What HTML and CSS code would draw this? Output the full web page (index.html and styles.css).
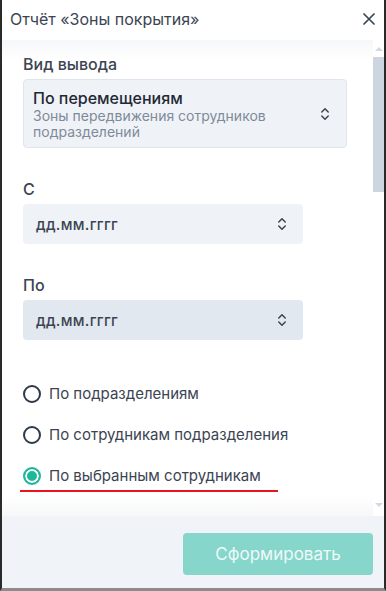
FILE: index.html
```html
<!DOCTYPE html>
<html lang="ru">
<head>
    <meta charset="UTF-8">
    <meta name="viewport" content="width=device-width, initial-scale=1.0">
    <title>Отчёт «Зоны покрытия»</title>
    <link rel="stylesheet" href="styles.css">
</head>
<body>
    <div class="dialog">
        <!-- Header -->
        <header class="dialog-header">
            <h1>Отчёт «Зоны покрытия»</h1>
            <button class="close-btn" aria-label="Закрыть">
                <svg width="12" height="12" viewBox="0 0 12 12"><path d="M1 1 L11 11 M11 1 L1 11" stroke="#3b4452" stroke-width="1.7" fill="none" stroke-linecap="round"/></svg>
            </button>
        </header>

        <!-- Form body -->
        <main class="dialog-body">
            <div class="field">
                <label class="field-label">Вид вывода</label>
                <div class="select select-wide">
                    <div class="select-text">
                        <div class="select-value">По перемещениям</div>
                        <div class="select-hint">Зоны передвижения сотрудников подразделений</div>
                    </div>
                    <svg class="chevrons" width="10" height="16" viewBox="0 0 10 16"><path d="M1.8 6 L5 2.8 L8.2 6 M1.8 10 L5 13.2 L8.2 10" stroke="#3b4452" stroke-width="1.5" fill="none" stroke-linecap="round" stroke-linejoin="round"/></svg>
                </div>
            </div>

            <div class="field">
                <label class="field-label">С</label>
                <div class="select select-date">
                    <div class="select-placeholder">дд.мм.гггг</div>
                    <svg class="chevrons" width="10" height="16" viewBox="0 0 10 16"><path d="M1.8 6 L5 2.8 L8.2 6 M1.8 10 L5 13.2 L8.2 10" stroke="#3b4452" stroke-width="1.5" fill="none" stroke-linecap="round" stroke-linejoin="round"/></svg>
                </div>
            </div>

            <div class="field">
                <label class="field-label">По</label>
                <div class="select select-date select-hover">
                    <div class="select-placeholder">дд.мм.гггг</div>
                    <svg class="chevrons" width="10" height="16" viewBox="0 0 10 16"><path d="M1.8 6 L5 2.8 L8.2 6 M1.8 10 L5 13.2 L8.2 10" stroke="#3b4452" stroke-width="1.5" fill="none" stroke-linecap="round" stroke-linejoin="round"/></svg>
                </div>
            </div>

            <div class="radio-group">
                <label class="radio"><span class="radio-dot"></span>По подразделениям</label>
                <label class="radio"><span class="radio-dot"></span>По сотрудникам подразделения</label>
                <label class="radio radio-checked"><span class="radio-dot"></span>По выбранным сотрудникам</label>
                <div class="red-line"></div>
            </div>

            <!-- Scrollbar -->
            <div class="scrollbar" aria-hidden="true">
                <span class="scroll-arrow scroll-up"></span>
                <span class="scroll-thumb"></span>
                <span class="scroll-arrow scroll-down"></span>
            </div>
            <div class="fade fade-top"></div>
            <div class="fade fade-bottom"></div>
        </main>

        <!-- Footer -->
        <footer class="dialog-footer">
            <button class="submit-btn" disabled>Сформировать</button>
        </footer>
    </div>
</body>
</html>
```

FILE: styles.css
```css
/* Reset */
* {
    margin: 0;
    padding: 0;
    box-sizing: border-box;
}

body {
    font-family: Inter, "Noto Sans", sans-serif;
    background-color: #fff;
    color: #3b4452;
}

.dialog {
    width: 386px;
    height: 591px;
    display: flex;
    flex-direction: column;
    border-left: 2px solid #2a2a2a;
    border-right: 2px solid #2a2a2a;
    border-bottom: 3px solid #8c8c8c;
    background-color: #fff;
}

.dialog-header {
    height: 40px;
    flex-shrink: 0;
    display: flex;
    align-items: center;
    justify-content: space-between;
    padding: 0 8px 2px 8px;
}

.dialog-header h1 {
    font-size: 16px;
    font-weight: 400;
    color: #3b4452;
}

.close-btn {
    border: none;
    background: none;
    width: 14px;
    height: 14px;
    display: flex;
    align-items: center;
    justify-content: center;
    cursor: pointer;
}

.dialog-body {
    position: relative;
    flex: 1;
    padding: 14px 0 0 21px;
    overflow: hidden;
}

.field {
    margin-bottom: 31px;
}

.field-label {
    display: block;
    font-size: 16px;
    font-weight: 500;
    line-height: 20px;
    color: #3b4452;
    margin-bottom: 5px;
}

.select {
    display: flex;
    align-items: center;
    justify-content: space-between;
    border-radius: 4px;
    background-color: #eff3f8;
}

.select-wide {
    width: 324px;
    padding: 8px 16px 7px 9px;
    border: 1px solid #dfe5ee;
}

.select-value {
    font-size: 16px;
    font-weight: 500;
    line-height: 20px;
    color: #1f2935;
}

.select-hint {
    font-size: 14px;
    line-height: 16px;
    color: #7f8a99;
    width: 260px;
}

.select-date {
    width: 280px;
    height: 40px;
    padding: 0 16px 0 13px;
}

.select-hover {
    background-color: #e2e8f0;
}

.select-placeholder {
    font-size: 15px;
    font-weight: 500;
    letter-spacing: 0.3px;
    color: #3b4452;
}

.radio-group {
    margin-top: 33px;
    margin-left: -3px;
}

.radio {
    display: flex;
    align-items: center;
    height: 41px;
    font-size: 15px;
    white-space: nowrap;
    color: #3b4452;
    padding-left: 3px;
}

.radio-dot {
    width: 18px;
    height: 18px;
    border: 2px solid #2f3a48;
    border-radius: 50%;
    margin-right: 8px;
    flex-shrink: 0;
}

.radio-checked .radio-dot {
    border-color: #1fb79b;
    background-color: #1fb79b;
    box-shadow: inset 0 0 0 2px #fff;
}

.red-line {
    width: 258px;
    height: 2px;
    background-color: #e8141e;
    margin-top: -6px;
}

.scrollbar {
    position: absolute;
    top: 0;
    right: 0;
    width: 11px;
    height: 100%;
    display: flex;
    flex-direction: column;
    align-items: center;
}

.scroll-arrow {
    width: 0;
    height: 0;
    border-left: 4px solid transparent;
    border-right: 4px solid transparent;
}

.scroll-up {
    margin-top: 7px;
    border-bottom: 4px solid #d3d9e2;
}

.scroll-down {
    margin-top: auto;
    margin-bottom: 9px;
    border-top: 4px solid #d3d9e2;
}

.scroll-thumb {
    width: 11px;
    height: 135px;
    margin-top: 6px;
    background-color: #cdd5e0;
}

.fade {
    position: absolute;
    left: 0;
    right: 11px;
    height: 20px;
    pointer-events: none;
}

.fade-top {
    top: 0;
    background: linear-gradient(#f6f7f9, rgba(255, 255, 255, 0));
}

.fade-bottom {
    bottom: 0;
    background: linear-gradient(rgba(255, 255, 255, 0), #f6f7f9);
}

.dialog-footer {
    height: 72px;
    flex-shrink: 0;
    display: flex;
    justify-content: flex-end;
    align-items: flex-start;
    padding: 17px 11px 0 0;
    background-color: #f0f3f8;
}

.submit-btn {
    width: 190px;
    height: 42px;
    border: none;
    border-radius: 4px;
    background-color: #86d6cc;
    color: #eefaf8;
    font-family: Inter, "Noto Sans", sans-serif;
    font-size: 17px;
}
```
